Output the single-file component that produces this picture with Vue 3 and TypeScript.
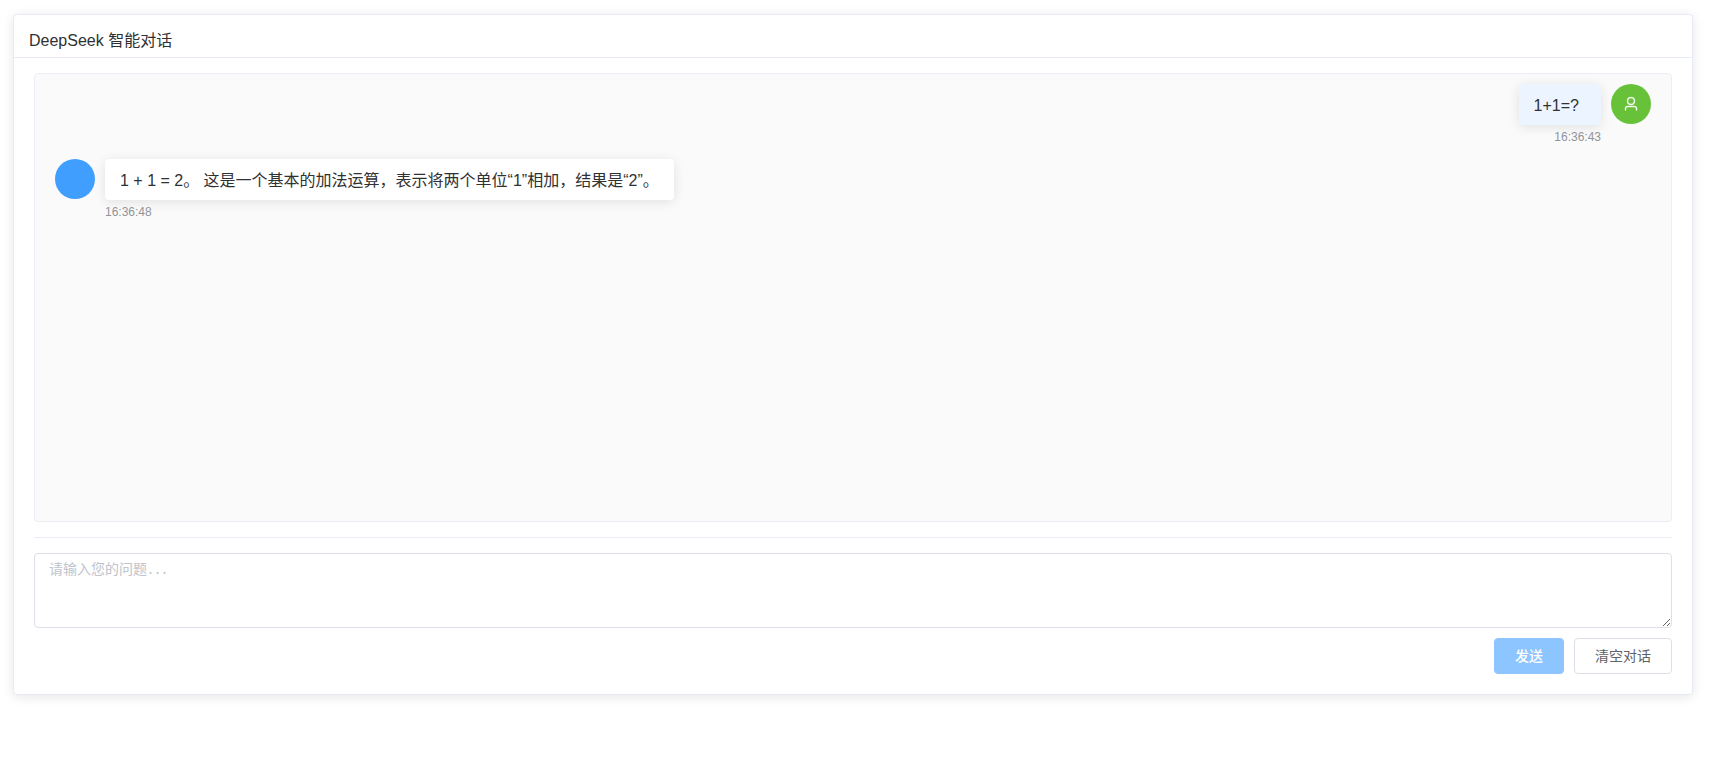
<script setup lang="ts">
import { computed, ref } from 'vue'

interface Message {
  id: number
  role: 'user' | 'assistant'
  content: string
  time: string
}

const messages = ref<Message[]>([
  { id: 1, role: 'user', content: '1+1=?', time: '16:36:43' },
  {
    id: 2,
    role: 'assistant',
    content: '1 + 1 = 2。 这是一个基本的加法运算，表示将两个单位“1”相加，结果是“2”。',
    time: '16:36:48',
  },
])

const draft = ref('')
const canSend = computed(() => draft.value.trim().length > 0)

function send(): void {
  if (!canSend.value) return
  messages.value.push({
    id: Date.now(),
    role: 'user',
    content: draft.value.trim(),
    time: new Date().toTimeString().slice(0, 8),
  })
  draft.value = ''
}

function clearChat(): void {
  messages.value = []
}
</script>

<template>
  <main class="chat-card">
    <header class="card-header">DeepSeek 智能对话</header>
    <div class="card-body">
      <section class="messages" aria-label="对话">
        <article v-for="m in messages" :key="m.id" class="message" :class="m.role">
          <div class="avatar">
            <svg v-if="m.role === 'user'" class="user-icon" viewBox="0 0 1024 1024" aria-hidden="true">
              <path
                fill="currentColor"
                stroke="currentColor"
                stroke-width="24"
                d="M512 512a192 192 0 1 0 0-384 192 192 0 0 0 0 384m0 64a256 256 0 1 1 0-512 256 256 0 0 1 0 512m320 320v-96a96 96 0 0 0-96-96H288a96 96 0 0 0-96 96v96a32 32 0 1 1-64 0v-96a160 160 0 0 1 160-160h448a160 160 0 0 1 160 160v96a32 32 0 1 1-64 0"
              />
            </svg>
          </div>
          <div class="content">
            <div class="bubble">{{ m.content }}</div>
            <time class="time">{{ m.time }}</time>
          </div>
        </article>
      </section>
      <form class="composer" @submit.prevent="send">
        <textarea v-model="draft" class="input" rows="3" placeholder="请输入您的问题..." aria-label="请输入您的问题"></textarea>
        <div class="actions">
          <button type="submit" class="btn primary" :disabled="!canSend">发送</button>
          <button type="button" class="btn" @click="clearChat">清空对话</button>
        </div>
      </form>
    </div>
  </main>
</template>

<style>
body {
  background: #fff;
}
</style>

<style scoped>
.chat-card {
  margin: 14px 16px 14px 13px;
  border: 1px solid #e6ebf5;
  border-radius: 4px;
  background: #fff;
  box-shadow: 0 2px 12px rgba(0, 0, 0, 0.1);
  color: #303133;
  font-family: 'Liberation Sans', Arial, 'Noto Sans CJK SC', sans-serif;
  font-size: 16px;
}

.card-header {
  padding: 15px 15px 6px;
  border-bottom: 1px solid #e6ebf5;
  line-height: 21px;
}

.card-body {
  padding: 15px 20px 20px;
}

.messages {
  box-sizing: border-box;
  height: 449px;
  padding: 10px 20px;
  overflow-y: auto;
  border: 1px solid #ebeef5;
  border-radius: 4px;
  background: #fafafa;
}

.message {
  display: flex;
  align-items: flex-start;
  gap: 10px;
  margin-bottom: 14px;
}

.message.user {
  flex-direction: row-reverse;
}

.avatar {
  display: flex;
  flex: none;
  align-items: center;
  justify-content: center;
  width: 40px;
  height: 40px;
  border-radius: 50%;
  background: #409eff;
  color: #fff;
}

.user .avatar {
  background: #67c23a;
}

.user-icon {
  width: 16px;
  height: 16px;
}

.content {
  display: flex;
  flex-direction: column;
  align-items: flex-start;
  gap: 5px;
  max-width: 80%;
}

.user .content {
  align-items: flex-end;
}

.bubble {
  padding: 11px 15px 9px;
  border-radius: 4px;
  background: #fff;
  box-shadow: 0 2px 12px rgba(0, 0, 0, 0.1);
  line-height: 21px;
}

.user .bubble {
  padding-right: 22px;
  background: #ecf5ff;
}

.time {
  color: #909399;
  font-size: 12px;
  line-height: 15px;
}

.composer {
  margin-top: 15px;
  padding-top: 15px;
  border-top: 1px solid #ebeef5;
}

.input {
  display: block;
  box-sizing: border-box;
  width: 100%;
  height: 75px;
  padding: 4px 14px;
  border: 1px solid #dcdfe6;
  border-radius: 4px;
  outline: none;
  background: #fff;
  color: #606266;
  font-family: 'Noto Sans CJK SC', sans-serif;
  font-feature-settings: 'hwid';
  font-size: 14px;
  line-height: 21px;
  resize: vertical;
}

.input:focus {
  border-color: #409eff;
}

.input::placeholder {
  color: #c0c4cc;
}

.actions {
  display: flex;
  justify-content: flex-end;
  gap: 10px;
  margin-top: 10px;
}

.btn {
  height: 36px;
  padding: 0 20px 2px;
  border: 1px solid #dcdfe6;
  border-radius: 4px;
  background: #fff;
  color: #606266;
  font-family: 'Noto Sans CJK SC', sans-serif;
  font-size: 14px;
  font-weight: 400;
  line-height: 14px;
  cursor: pointer;
}

.btn.primary {
  border-color: #409eff;
  background: #409eff;
  color: #fff;
  font-weight: 500;
}

.btn.primary:disabled {
  border-color: #8cc5ff;
  background: #8cc5ff;
  cursor: not-allowed;
}
</style>
